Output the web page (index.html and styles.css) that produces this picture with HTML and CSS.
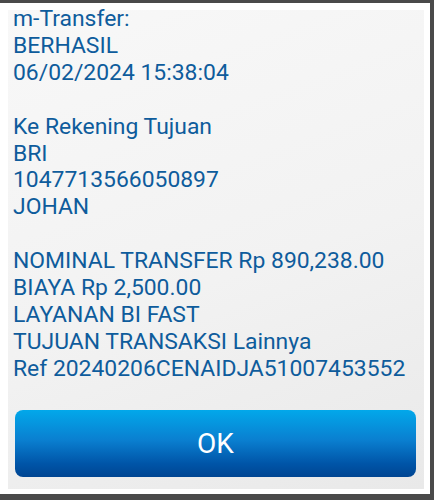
FILE: index.html
```html
<!DOCTYPE html>
<html lang="id">
<head>
  <meta charset="UTF-8">
  <title>m-Transfer</title>
  <link rel="stylesheet" href="styles.css">
</head>
<body>
  <div class="dialog">
    <div class="panel">
      <div class="message">
        <p>m-Transfer:<br>BERHASIL<br>06/02/2024 15:38:04</p>
        <p>Ke Rekening Tujuan<br>BRI<br>1047713566050897<br>JOHAN</p>
        <p>NOMINAL TRANSFER Rp 890,238.00<br>BIAYA Rp 2,500.00<br>LAYANAN BI FAST<br>TUJUAN TRANSAKSI Lainnya<br>Ref 20240206CENAIDJA51007453552</p>
      </div>
      <button class="ok-button">OK</button>
    </div>
  </div>
</body>
</html>
```

FILE: styles.css
```css
html, body {
  margin: 0;
  height: 100%;
}
body {
  background: #4a4a4a;
  font-family: Roboto, "Noto Sans", sans-serif;
  padding: 3px 4px 6px 0;
  box-sizing: border-box;
}
.dialog {
  background: #fff;
  height: 100%;
  padding: 7px 6px 5px 8px;
  box-sizing: border-box;
}
.panel {
  background: linear-gradient(160deg, #f8f8f8 0%, #f2f2f2 55%, #e9e9e9 100%);
  height: 100%;
  box-sizing: border-box;
  padding: 0 8px 12px 5px;
  display: flex;
  flex-direction: column;
}
.message {
  color: #0e5c9c;
  font-size: 22.9px;
  line-height: 26.9px;
  margin-top: -4px;
  flex: 1;
}
.message p {
  margin: 0 0 26.9px;
}
.ok-button {
  height: 68px;
  border: none;
  border-radius: 8px;
  background: linear-gradient(#02a8ea 0%, #0a7fd0 45%, #0055a8 80%, #004592 100%);
  color: #fff;
  font-family: Roboto, "Noto Sans", sans-serif;
  font-size: 28px;
  margin-left: 2px;
}
```
